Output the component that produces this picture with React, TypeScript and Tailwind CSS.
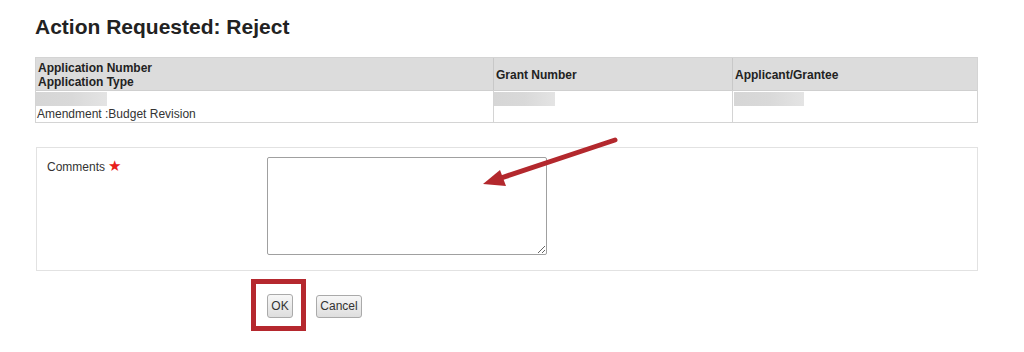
import React from 'react';

const font = { fontFamily: '"Liberation Sans", Arial, sans-serif' };

function Blur({ w }: { w: string }) {
  return <div className={`h-[14px] ${w} bg-gradient-to-r from-[#d6d6d6] via-[#d9d9d9] to-[#e4e4e4]`} />;
}

export default function App() {
  return (
    <div className="relative h-[352px] w-[1024px] bg-white text-[#222]" style={font}>
      <div className="pl-[35px] pt-[14px]">
        <h1 className="text-[21px] font-bold leading-[26px] text-[#222]">Action Requested: Reject</h1>

        {/* summary table */}
        <div className="mt-[17px] w-[943px] border border-[#d4d4d4] text-[12px] leading-[14px]">
          <div className="grid grid-cols-[457px_239px_1fr] bg-[#dcdcdc] font-bold">
            <div className="px-[2px] pt-[3px] pb-[2px] h-[32px]">
              <div>Application Number</div>
              <div>Application Type</div>
            </div>
            <div className="flex items-center border-l border-[#c8c8c8] px-[2px] pt-[1px]">Grant Number</div>
            <div className="flex items-center border-l border-[#c8c8c8] px-[2px] pt-[1px]">Applicant/Grantee</div>
          </div>
          <div className="grid grid-cols-[457px_239px_1fr] border-t border-[#cfcfcf] bg-white">
            <div className="h-[31px] pt-[1px]">
              <Blur w="w-[71px]" />
              <div className="px-[1px] pt-[1px] text-[#333]">Amendment :Budget Revision</div>
            </div>
            <div className="border-l border-[#d4d4d4] pt-[1px]">
              <Blur w="w-[61px]" />
            </div>
            <div className="border-l border-[#d4d4d4] pt-[1px] pl-[1px]">
              <Blur w="w-[70px]" />
            </div>
          </div>
        </div>

        {/* comments panel */}
        <div className="mt-[24px] ml-[1px] flex h-[124px] w-[942px] border border-[#e2e2e2] pl-[10px] pt-[9px]">
          <div className="w-[220px] pt-[2px] text-[12px] leading-[14px] text-[#333]">
            Comments <span className="text-[15px] leading-[14px] text-[#e8201c]">★</span>
          </div>
          <textarea className="h-[98px] w-[280px] resize border border-[#a0a0a0] rounded-[2px] bg-white" />
        </div>

        {/* buttons */}
        <div className="ml-[232px] mt-[23px] flex items-center gap-[23px] text-[12px] text-[#333]">
          <button className="h-[24px] w-[26px] rounded-[3px] border border-[#aaa] bg-gradient-to-b from-[#f7f7f7] to-[#dedede]">
            OK
          </button>
          <button className="h-[23px] w-[46px] rounded-[3px] border border-[#aaa] bg-gradient-to-b from-[#f7f7f7] to-[#dedede]">
            Cancel
          </button>
        </div>
      </div>

      {/* red highlight box around OK */}
      <div className="absolute left-[251px] top-[279px] h-[52px] w-[55px] border-[5px] border-[#b5282e]" />

      {/* annotation arrow */}
      <svg className="absolute left-0 top-0" width="1024" height="352">
        <line x1="615" y1="140" x2="498" y2="179" stroke="#b3282d" strokeWidth="5" strokeLinecap="round" />
        <polygon points="483,184 500,170 506,186" fill="#b3282d" />
      </svg>
    </div>
  );
}
